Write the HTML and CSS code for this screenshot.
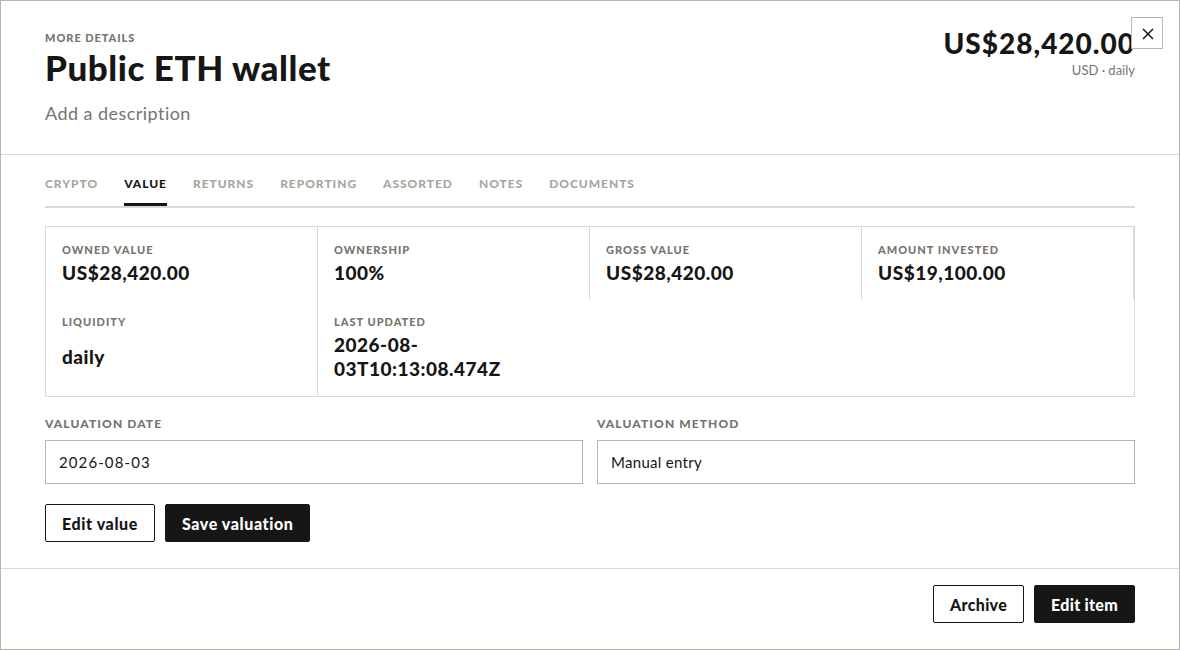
FILE: index.html
```html
<!DOCTYPE html>
<html lang="en">
<head>
<meta charset="utf-8">
<title>Public ETH wallet</title>
<link rel="stylesheet" href="styles.css">
</head>
<body>
<div class="modal">
  <button class="close-btn" type="button" aria-label="Close">
    <svg width="12" height="12" viewBox="0 0 12 12" aria-hidden="true">
      <path d="M1 1L11 11M11 1L1 11" stroke="#161616" stroke-width="1.5" fill="none"/>
    </svg>
  </button>

  <header class="modal-header">
    <div class="title-block">
      <div class="eyebrow">More details</div>
      <h1 class="title">Public ETH wallet</h1>
      <div class="description">Add a description</div>
    </div>
    <div class="price-block">
      <div class="price">US$28,420.00</div>
      <div class="price-meta">USD · daily</div>
    </div>
  </header>

  <section class="modal-body">
    <nav class="tabs">
      <span class="tab">Crypto</span>
      <span class="tab active">Value</span>
      <span class="tab">Returns</span>
      <span class="tab">Reporting</span>
      <span class="tab">Assorted</span>
      <span class="tab">Notes</span>
      <span class="tab">Documents</span>
    </nav>

    <div class="stats">
      <div class="stat">
        <div class="stat-label">Owned value</div>
        <div class="stat-value">US$28,420.00</div>
      </div>
      <div class="stat">
        <div class="stat-label">Ownership</div>
        <div class="stat-value">100%</div>
      </div>
      <div class="stat">
        <div class="stat-label">Gross value</div>
        <div class="stat-value">US$28,420.00</div>
      </div>
      <div class="stat">
        <div class="stat-label">Amount invested</div>
        <div class="stat-value">US$19,100.00</div>
      </div>
      <div class="stat stat-tall">
        <div class="stat-label">Liquidity</div>
        <div class="stat-value">daily</div>
      </div>
      <div class="stat stat-tall stat-last">
        <div class="stat-label">Last updated</div>
        <div class="stat-value">2026-08-03T10:13:08.474Z</div>
      </div>
    </div>

    <div class="form-grid">
      <label class="field">
        <span class="field-label">Valuation date</span>
        <span class="field-input field-input-date">2026-08-03</span>
      </label>
      <label class="field">
        <span class="field-label">Valuation method</span>
        <span class="field-input">Manual entry</span>
      </label>
    </div>

    <div class="actions">
      <button class="btn btn-outline" type="button">Edit value</button>
      <button class="btn btn-solid" type="button">Save valuation</button>
    </div>
  </section>

  <footer class="modal-footer">
    <button class="btn btn-outline" type="button">Archive</button>
    <button class="btn btn-solid" type="button">Edit item</button>
  </footer>
</div>
</body>
</html>
```

FILE: styles.css
```css
* {
  box-sizing: border-box;
}

html,
body {
  margin: 0;
  padding: 0;
  background: #ffffff;
}

body {
  font-family: Lato, "Noto Sans", sans-serif;
  color: #161616;
}

.modal {
  position: relative;
  width: 1180px;
  height: 650px;
  border: 1px solid #b9b5ac;
  background: #ffffff;
  display: flex;
  flex-direction: column;
}

/* close control sits over the header corner */
.close-btn {
  position: absolute;
  top: 16px;
  right: 16px;
  width: 32px;
  height: 32px;
  padding: 0;
  border: 1px solid #b9b5ac;
  background: #ffffff;
  display: flex;
  align-items: center;
  justify-content: center;
  cursor: pointer;
}

.close-btn svg {
  display: block;
  margin: 1px 0 0 2px;
}

/* header */
.modal-header {
  display: flex;
  justify-content: space-between;
  align-items: flex-start;
  padding: 30px 44px 29px;
  border-bottom: 1px solid #dcd9d2;
}

.eyebrow {
  font-size: 11px;
  line-height: 14px;
  font-weight: 900;
  letter-spacing: 0.95px;
  text-transform: uppercase;
  color: #77746d;
}

.title {
  margin: 2px 0 0;
  font-size: 35px;
  line-height: 40px;
  font-weight: 900;
  letter-spacing: 0.55px;
}

.description {
  margin-top: 14px;
  font-size: 18px;
  line-height: 24px;
  letter-spacing: 0.45px;
  color: #77746d;
}

.price-block {
  text-align: right;
}

.price {
  font-size: 28px;
  line-height: 24px;
  font-weight: 900;
  letter-spacing: 1px;
}

.price-meta {
  margin-top: 7px;
  font-size: 13px;
  line-height: 16px;
  color: #77746d;
}

/* body */
.modal-body {
  padding: 21px 44px 26px;
}

.tabs {
  display: flex;
  gap: 26px;
  border-bottom: 2px solid #dcd9d2;
}

.tab {
  font-size: 12px;
  line-height: 16px;
  font-weight: 900;
  letter-spacing: 0.95px;
  text-transform: uppercase;
  color: #aaa69d;
  padding-bottom: 11px;
  border-bottom: 3px solid transparent;
}

.tab.active {
  color: #161616;
  border-bottom-color: #161616;
}

.stats {
  margin-top: 18px;
  display: grid;
  grid-template-columns: repeat(4, 1fr);
  border: 1px solid #dcd9d2;
}

.stat {
  display: flex;
  flex-direction: column;
  padding: 16px 16px 14px;
  border-right: 1px solid #dcd9d2;
}

.stat-tall {
  padding-bottom: 15px;
}

.stat-last {
  border-right: none;
}

.stat-label {
  font-size: 11px;
  line-height: 14px;
  font-weight: 900;
  letter-spacing: 1px;
  text-transform: uppercase;
  color: #77746d;
}

.stat-value {
  margin-top: 4px;
  font-size: 19px;
  line-height: 24px;
  font-weight: 900;
  letter-spacing: 0.5px;
}

.stat-tall .stat-value {
  flex: 1;
  display: flex;
  align-items: center;
}

/* valuation form */
.form-grid {
  margin-top: 20px;
  display: grid;
  grid-template-columns: 1fr 1fr;
  gap: 14px;
}

.field {
  display: flex;
  flex-direction: column;
}

.field-label {
  font-size: 12px;
  line-height: 14px;
  font-weight: 900;
  letter-spacing: 1.1px;
  text-transform: uppercase;
  color: #77746d;
}

.field-input {
  margin-top: 9px;
  height: 44px;
  display: flex;
  align-items: center;
  padding: 0 13px;
  border: 1px solid #b9b5ac;
  font-size: 15px;
  letter-spacing: 0.3px;
  color: #161616;
}

.field-input-date {
  letter-spacing: 1.1px;
}

.actions {
  margin-top: 20px;
  display: flex;
  gap: 10px;
}

.btn {
  height: 38px;
  padding: 0 16px;
  border: 1px solid #161616;
  border-radius: 2px;
  font-family: Lato, "Noto Sans", sans-serif;
  font-size: 16px;
  font-weight: 900;
  letter-spacing: 0.6px;
  cursor: pointer;
}

.btn-outline {
  background: #ffffff;
  color: #161616;
}

.btn-solid {
  background: #161616;
  color: #ffffff;
}

/* footer */
.modal-footer {
  margin-top: auto;
  display: flex;
  justify-content: flex-end;
  gap: 10px;
  padding: 16px 44px 26px;
  border-top: 1px solid #dcd9d2;
}

.modal-footer .btn {
  letter-spacing: 0.3px;
}
```
